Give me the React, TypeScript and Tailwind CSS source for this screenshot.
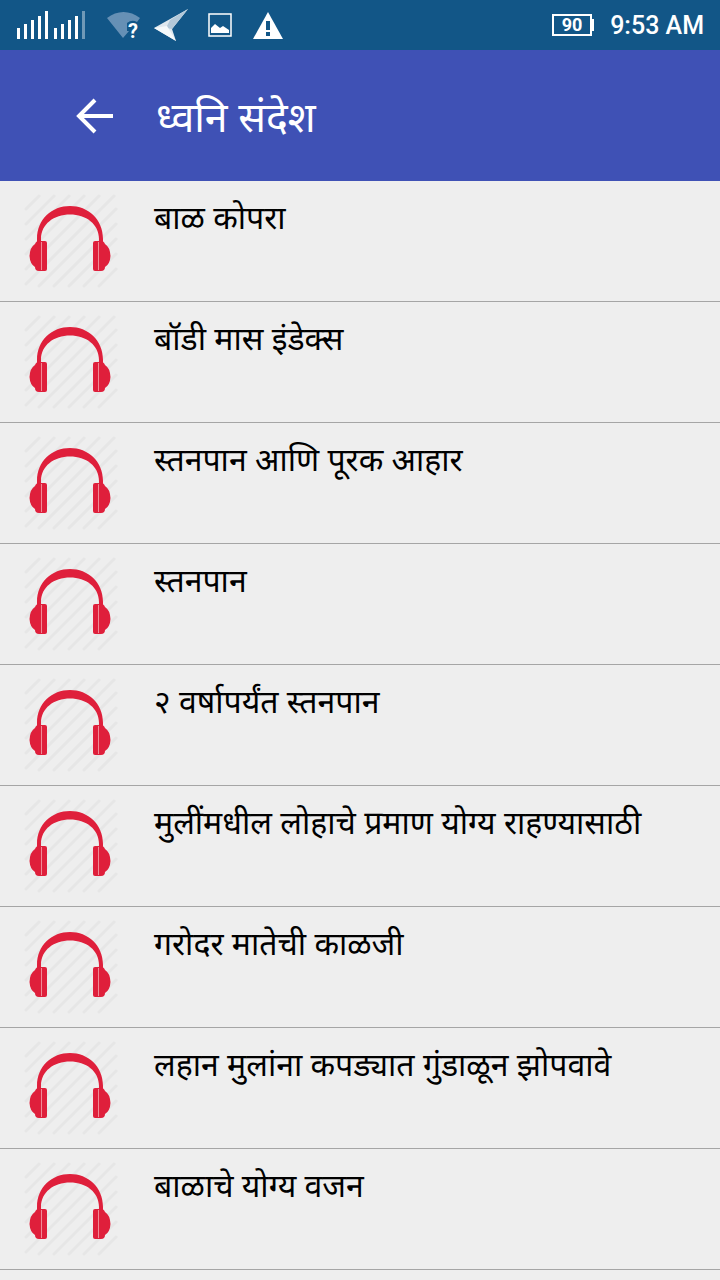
import type { ReactNode } from "react";

const messages = [
  "बाळ कोपरा",
  "बॉडी मास इंडेक्स",
  "स्तनपान आणि पूरक आहार",
  "स्तनपान",
  "२ वर्षापर्यंत स्तनपान",
  "मुलींमधील लोहाचे प्रमाण योग्य राहण्यासाठी",
  "गरोदर मातेची काळजी",
  "लहान मुलांना कपड्यात गुंडाळून झोपवावे",
  "बाळाचे योग्य वजन",
];

function SignalIcon() {
  return (
    <svg width="70" height="30" viewBox="0 0 70 30" fill="#fff" aria-hidden="true">
      <rect x="1" y="18" width="3" height="11" />
      <rect x="8" y="14" width="3" height="15" />
      <rect x="15" y="10" width="3" height="19" />
      <rect x="22" y="6" width="3" height="23" />
      <rect x="29" y="1" width="3" height="28" />
      <rect x="38" y="18" width="3" height="11" />
      <rect x="45" y="14" width="3" height="15" />
      <rect x="52" y="10" width="3" height="19" />
      <rect x="59" y="6" width="3" height="23" />
      <rect x="66" y="1" width="3" height="28" opacity="0.4" />
    </svg>
  );
}

function WifiIcon() {
  return (
    <div className="relative h-7 w-8">
      <svg width="34" height="28" viewBox="0 0 34 28" aria-hidden="true">
        <path d="M1 7C11-1 24-1 34 7L31 11Q26 8 21 12V20H23L17 27Z" fill="#6690b5" />
      </svg>
      <span className="absolute right-0 top-2 text-xl font-bold leading-6">?</span>
    </div>
  );
}

function PlaneIcon() {
  return (
    <svg width="36" height="34" viewBox="0 0 36 34" aria-hidden="true">
      <path d="M34 1L0 20L22 33L18 21Z" fill="#dfe8ef" />
      <path d="M34 1L16 12L12 20L18 21Z" fill="#b3c8d9" />
      <path d="M0 20L13 18L22 33Z" fill="#f5f9fb" />
    </svg>
  );
}

function ImageIcon() {
  return (
    <svg width="24" height="24" viewBox="0 0 24 24" aria-hidden="true">
      <rect x="1" y="1" width="22" height="22" fill="none" stroke="#fff" strokeWidth="1.500" />
      <path d="M3 20V15L7 11L12 15L15 13L21 17V20Z" fill="#fff" />
    </svg>
  );
}

function WarningIcon() {
  return (
    <svg width="30" height="27" viewBox="0 0 30 27" aria-hidden="true">
      <path d="M15 0L30 27H0Z" fill="#fff" />
      <path d="M13 9h4v9h-4zM13 20h4v4h-4z" fill="#125687" />
    </svg>
  );
}

function BatteryIcon({ children }: { children: ReactNode }) {
  return (
    <div className="flex items-center">
      <div className="flex h-[22px] w-10 items-center justify-center border-2 border-white text-lg font-bold leading-4">
        {children}
      </div>
      <div className="h-3 w-0.5 bg-white" />
    </div>
  );
}

function HeadphonesIcon() {
  return (
    <svg className="shrink-0" width="96" height="96" viewBox="0 1 96 96" aria-hidden="true">
      {/* Hatched backdrop */}
      <path
        d="M4 17L17 4M4 32L32 4M4 47L47 4M4 62L62 4M4 77L77 4M4 92L92 4M17 94L94 17M32 94L94 32M47 94L94 47M62 94L94 62M77 94L94 77"
        stroke="#e6e6e6"
        strokeWidth="3"
        strokeLinecap="round"
      />
      <g fill="#df1f3b">
        <path d="M15 52V47C15 27 30 14 48 14S81 27 81 47V52H77V47C77 32 64 22.500 48 22.500S19 32 19 47V52Z" />
        <path d="M17 49H23Q25 49 25 51V77Q25 79 23 79H17Q13 79 13 75Q8 72 7.500 64Q8 55 13 52Q14 49 17 49Z" />
        <path d="M79 49H73Q71 49 71 51V77Q71 79 73 79H79Q83 79 83 75Q88 72 88.500 64Q88 55 83 52Q82 49 79 49Z" />
      </g>
      <path d="M19.500 50V78M76.500 50V78" stroke="#f08a97" strokeWidth="1" />
    </svg>
  );
}

export default function App() {
  return (
    <div className="min-h-screen bg-[#eeeeee] font-['Noto_Sans',sans-serif] text-black">
      {/* Status bar */}
      <div className="flex h-[50px] items-center justify-between bg-[#125687] px-4 font-[Roboto,sans-serif] text-white">
        <div className="flex items-center">
          <SignalIcon />
          <div className="ml-5 flex items-center gap-4">
            <WifiIcon />
            <PlaneIcon />
          </div>
          <div className="ml-[18px] flex items-center gap-[21px]">
            <ImageIcon />
            <WarningIcon />
          </div>
        </div>
        <div className="flex items-center gap-4">
          <BatteryIcon>90</BatteryIcon>
          <span className="pt-0.5 text-[25px] font-medium leading-8">9:53 AM</span>
        </div>
      </div>

      {/* App bar */}
      <header className="flex h-[131px] items-center gap-[42px] bg-[#3f51b5] pl-[76px] text-white">
        <button type="button" aria-label="मागे">
          <svg width="38" height="36" viewBox="0 0 38 36" fill="none" stroke="#fff" strokeWidth="4" aria-hidden="true">
            <path d="M19 2L3 18L19 34M3 18H37" />
          </svg>
        </button>
        <h1 className="text-[41px] leading-[56px]">ध्वनि संदेश</h1>
      </header>

      <ul>
        {messages.map((title) => (
          <li key={title} className="border-b border-[#a5a5a5]">
            <button type="button" className="flex h-30 w-full items-start gap-9 px-[22px] py-3 text-left">
              <HeadphonesIcon />
              <span className="text-[32px] leading-[48px]">{title}</span>
            </button>
          </li>
        ))}
      </ul>
    </div>
  );
}
